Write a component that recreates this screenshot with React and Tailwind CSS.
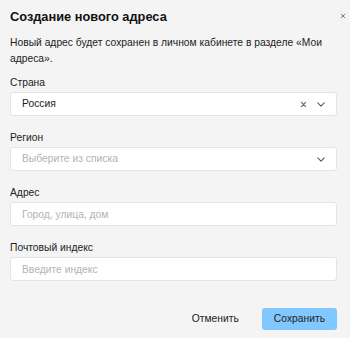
import { useState } from 'react'

const FONT = { fontFamily: '"Liberation Sans", Arial, sans-serif' }

function Cross({ className }) {
  return (
    <svg viewBox="0 0 10 10" className={className} fill="none" stroke="currentColor" strokeWidth="1.6" strokeLinecap="round">
      <path d="M2 2l6 6M8 2l-6 6" />
    </svg>
  )
}

function Chevron({ className }) {
  return (
    <svg viewBox="0 0 10 6" className={className} fill="none" stroke="currentColor" strokeWidth="1.3" strokeLinecap="round" strokeLinejoin="round">
      <path d="M1 1l4 4 4-4" />
    </svg>
  )
}

function Field({ label, children }) {
  return (
    <div className="flex flex-col">
      <label className="text-[10.3px] leading-4 mb-[1px] text-[#222]">{label}</label>
      {children}
    </div>
  )
}

function SelectBox({ value, placeholder, clearable }) {
  return (
    <div className="h-[24px] flex items-center bg-white border border-[#e4e4e4] rounded-[3px] pl-[11px] pr-[11px]">
      <span className={`flex-1 text-[10.3px] ${value ? 'text-[#222]' : 'text-[#b3b3b3]'}`}>{value || placeholder}</span>
      {clearable && <Cross className="w-[7px] h-[7px] text-[#666] mr-[10px]" />}
      <Chevron className="w-[8px] h-[5px] text-[#555]" />
    </div>
  )
}

function TextBox({ placeholder }) {
  const [v, setV] = useState('')
  return (
    <input
      value={v}
      onChange={(e) => setV(e.target.value)}
      placeholder={placeholder}
      className="h-[24px] bg-white border border-[#e4e4e4] rounded-[3px] px-[11px] text-[10.3px] text-[#222] placeholder:text-[#b3b3b3] outline-none"
      style={FONT}
    />
  )
}

export default function App() {
  return (
    <div className="relative w-[350px] h-[338px] bg-[#f4f4f4] overflow-hidden" style={FONT}>
      {/* close */}
      <button className="absolute top-[13px] right-[4px] text-[#777]">
        <Cross className="w-[6px] h-[6px]" />
      </button>

      <div className="pl-[10px] pr-[13px] pt-[7px]">
        <h2 className="text-[12.8px] leading-5 font-bold text-[#111]">Создание нового адреса</h2>
        <p className="mt-[8px] text-[10.3px] leading-4 text-[#222]">
          Новый адрес будет сохранен в личном кабинете в разделе «Мои адреса».
        </p>

        <div className="mt-[8px] flex flex-col gap-[14px]">
          <Field label="Страна">
            <SelectBox value="Россия" clearable />
          </Field>
          <Field label="Регион">
            <SelectBox placeholder="Выберите из списка" />
          </Field>
          <Field label="Адрес">
            <TextBox placeholder="Город, улица, дом" />
          </Field>
          <Field label="Почтовый индекс">
            <TextBox placeholder="Введите индекс" />
          </Field>
        </div>

        <div className="mt-[27px] flex justify-end items-center gap-[11px]">
          <button className="h-[22px] px-[12px] text-[10.3px] text-[#222]">Отменить</button>
          <button className="h-[22px] px-[12px] rounded-[3px] bg-[#80c8ff] text-[10.3px] text-[#222]">Сохранить</button>
        </div>
      </div>
    </div>
  )
}
